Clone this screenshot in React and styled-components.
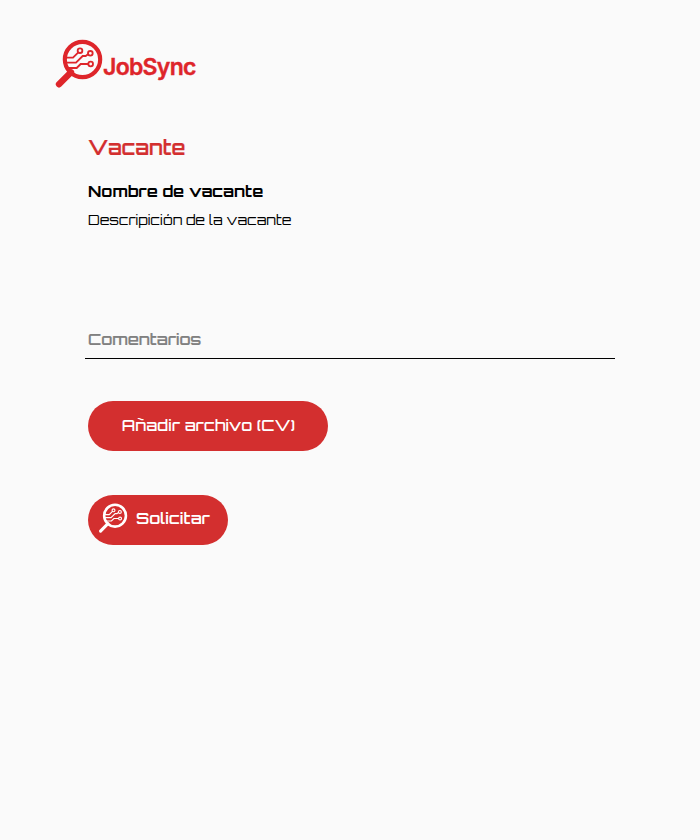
import React from "react";
import styled, { createGlobalStyle } from "styled-components";

const GlobalStyle = createGlobalStyle`
  * { box-sizing: border-box; }
  body {
    margin: 0;
    background: #fafafa;
    font-family: Orbitron, "DejaVu Sans", sans-serif;
  }
`;

const Page = styled.div`
  min-height: 840px;
  padding: 34px 85px 0 50px;
`;

const Brand = styled.header`
  display: flex;
  height: 60px;
  color: #de252a;
`;

const BrandName = styled.span`
  margin: 18px 0 0 -7px;
  font: 600 23px/30px Inter, sans-serif;
  letter-spacing: -0.7px;
  -webkit-text-stroke: 0.4px currentColor;
  white-space: nowrap;
`;

const Glass = styled.svg`
  flex: none;
  width: ${(p) => p.$size}px;
  height: ${(p) => p.$size}px;
`;

const Form = styled.main`
  display: flex;
  flex-direction: column;
  align-items: flex-start;
  padding: 40px 0 0 38px;
`;

const Title = styled.h1`
  margin: 0;
  color: #d32f2f;
  font-size: 20px;
  line-height: 28px;
  font-weight: 600;
  -webkit-text-stroke: 0.2px currentColor;
`;

const JobName = styled.h2`
  margin: 17px 0 0;
  font-size: 16px;
  line-height: 24px;
  font-weight: 700;
`;

const Description = styled.p`
  margin: 6px 0 0;
  font-size: 14px;
  line-height: 22px;
  font-weight: 400;
`;

const Comments = styled.input`
  width: 530px;
  height: 41px;
  margin: 87px 0 0 -3px;
  padding: 2px 3px 0;
  border: 0;
  border-bottom: 1px solid #000;
  outline: 0;
  background: transparent;
  font: 500 16px Orbitron, "DejaVu Sans", sans-serif;
  &::placeholder {
    color: #808080;
    opacity: 1;
    -webkit-text-stroke: 0.2px #808080;
  }
`;

const Button = styled.button`
  display: flex;
  align-items: center;
  justify-content: ${(p) => (p.$icon ? "flex-start" : "center")};
  width: ${(p) => (p.$icon ? 140 : 240)}px;
  height: 50px;
  margin-top: ${(p) => (p.$icon ? 44 : 42)}px;
  padding: ${(p) => (p.$icon ? "0 0 4px 7px" : "0 0 3px 1px")};
  border: 0;
  border-radius: 25px;
  background: #d32f2f;
  color: #fff;
  font: ${(p) => (p.$icon ? 600 : 500)} 16px/24px Orbitron, "DejaVu Sans", sans-serif;
  white-space: nowrap;
`;

const Label = styled.span`
  margin-left: ${(p) => p.$gap || 0}px;
`;

function CircuitGlass({ size, thin }) {
  return (
    <Glass $size={size} viewBox="0 0 180 180" fill="none" stroke="currentColor" aria-hidden="true">
      <circle cx="97.5" cy="76.5" r="53" strokeWidth="12.5" />
      <path d="M27 151L63 115" strokeWidth={thin ? 15 : 19} strokeLinecap="round" />
      <g strokeWidth="5.5">
        <path d="M48 71H69L85 55M48 86H78L98 66H107L115 60M54 102H80L92 90H115" />
        <circle cx="90" cy="50" r="7" />
        <circle cx="121" cy="58" r="7" />
        <circle cx="122" cy="90" r="7" />
      </g>
    </Glass>
  );
}

export default function App() {
  return (
    <>
      <GlobalStyle />
      <Page>
        <Brand>
          <CircuitGlass size={60} />
          <BrandName>JobSync</BrandName>
        </Brand>
        <Form>
          <Title>Vacante</Title>
          <JobName>Nombre de vacante</JobName>
          <Description>Descripición de la vacante</Description>
          <Comments placeholder="Comentarios" />
          <Button type="button">
            <Label>Añadir archivo (CV)</Label>
          </Button>
          <Button type="button" $icon>
            <CircuitGlass size={37} thin />
            <Label $gap={4}>Solicitar</Label>
          </Button>
        </Form>
      </Page>
    </>
  );
}
